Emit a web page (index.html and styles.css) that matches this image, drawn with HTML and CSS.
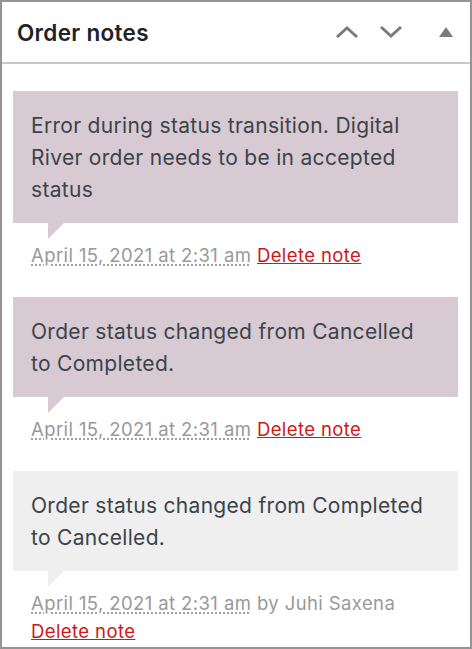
FILE: index.html
```html
<!DOCTYPE html>
<html lang="en">
<head>
  <meta charset="UTF-8" />
  <meta name="viewport" content="width=device-width, initial-scale=1.0"/>
  <title>Order notes</title>
  <link rel="stylesheet" href="styles.css">
</head>
<body>
  <div class="postbox">
    <div class="postbox-header">
      <h2>Order notes</h2>
      <div class="handle-actions">
        <button type="button" class="handle-btn" aria-label="Move up">
          <svg width="24" height="14" viewBox="0 0 24 14"><polyline points="2,12 12,3 22,12" fill="none" stroke="#787c82" stroke-width="3"/></svg>
        </button>
        <button type="button" class="handle-btn" aria-label="Move down">
          <svg width="24" height="14" viewBox="0 0 24 14"><polyline points="2,2 12,11 22,2" fill="none" stroke="#787c82" stroke-width="3"/></svg>
        </button>
        <button type="button" class="handle-btn toggle" aria-label="Toggle panel">
          <svg width="14" height="10" viewBox="0 0 14 10"><polygon points="7,0 14,10 0,10" fill="#787c82"/></svg>
        </button>
      </div>
    </div>

    <div class="inside">
      <ul class="order-notes">
        <li class="note system-note">
          <div class="note-content">
            <p>Error during status transition. Digital River order needs to be in accepted status</p>
          </div>
          <p class="meta">
            <abbr class="exact-date" title="2021-04-15 02:31:00">April 15, 2021 at 2:31 am</abbr>
            <a href="#" class="delete-note">Delete note</a>
          </p>
        </li>
        <li class="note system-note">
          <div class="note-content">
            <p>Order status changed from Cancelled to Completed.</p>
          </div>
          <p class="meta">
            <abbr class="exact-date" title="2021-04-15 02:31:00">April 15, 2021 at 2:31 am</abbr>
            <a href="#" class="delete-note">Delete note</a>
          </p>
        </li>
        <li class="note">
          <div class="note-content">
            <p>Order status changed from Completed to Cancelled.</p>
          </div>
          <p class="meta">
            <abbr class="exact-date" title="2021-04-15 02:31:00">April 15, 2021 at 2:31 am</abbr> by Juhi Saxena
            <a href="#" class="delete-note">Delete note</a>
          </p>
        </li>
      </ul>
    </div>
  </div>
</body>
</html>
```

FILE: styles.css
```css
* {
  box-sizing: border-box;
}

body {
  margin: 0;
  padding: 0;
  background-color: #ffffff;
  font-family: Inter, "Liberation Sans", Arial, sans-serif;
  color: #3c434a;
}

.postbox {
  width: 472px;
  height: 649px;
  border: 2px solid #949494;
  background-color: #ffffff;
  overflow: hidden;
}

.postbox-header {
  display: flex;
  align-items: center;
  justify-content: space-between;
  height: 62px;
  border-bottom: 2px solid #c8c8c8;
  padding: 0 0 0 15px;
}

.postbox-header h2 {
  margin: 0;
  font-size: 22.5px;
  font-weight: 600;
  letter-spacing: 0.3px;
  color: #1d2327;
}

.handle-actions {
  display: flex;
  align-items: center;
  padding-right: 13px;
}

.handle-btn {
  display: flex;
  align-items: center;
  justify-content: center;
  width: 44px;
  height: 40px;
  padding: 0;
  border: none;
  background: none;
  cursor: pointer;
}

.handle-btn.toggle {
  width: 44px;
  justify-content: flex-end;
  padding-right: 4px;
}

.inside {
  padding: 27px 12px 0 11px;
}

.order-notes {
  list-style: none;
  margin: 0;
  padding: 0;
}

.note {
  margin-bottom: 28px;
}

.note-content {
  position: relative;
  padding: 19px 24px 17px 18px;
  background-color: #efefef;
}

.system-note .note-content {
  background-color: #d7cad2;
}

.note-content::after {
  content: "";
  position: absolute;
  bottom: -16px;
  left: 35px;
  width: 0;
  height: 0;
  border-style: solid;
  border-width: 16px 16px 0 0;
  border-color: #efefef transparent;
}

.system-note .note-content::after {
  border-color: #d7cad2 transparent;
}

.note-content p {
  margin: 0;
  font-size: 21px;
  line-height: 32px;
  letter-spacing: 0.3px;
}

.meta {
  margin: 18px 0 0;
  padding: 0 18px;
  font-size: 18.5px;
  line-height: 28px;
  letter-spacing: 0.4px;
  color: #999999;
}

.exact-date {
  text-decoration: underline dotted;
  text-underline-offset: 3px;
}

.delete-note {
  color: #cc1818;
}
```
